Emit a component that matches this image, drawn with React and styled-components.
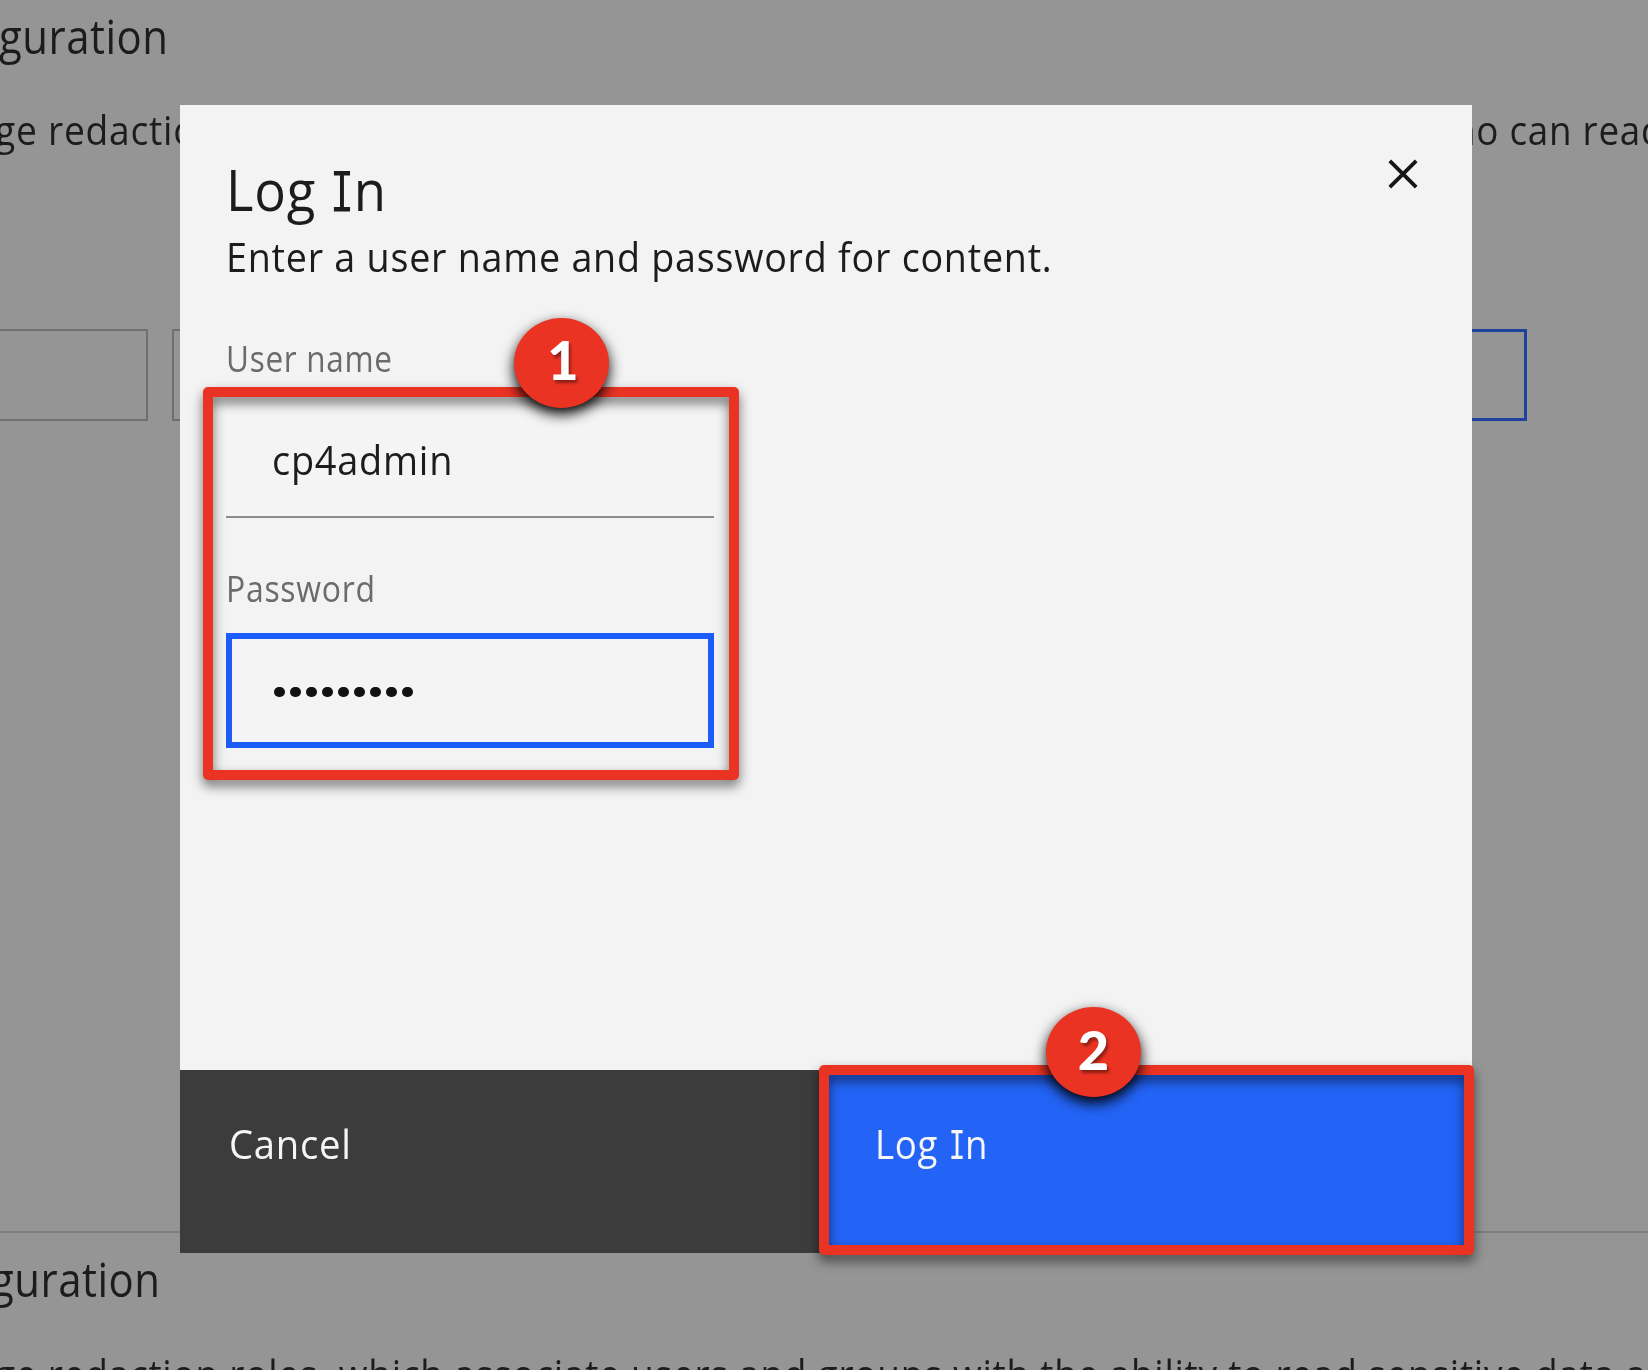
import React from "react";
import styled, { createGlobalStyle } from "styled-components";

const GlobalStyle = createGlobalStyle`
  *, *::before, *::after { box-sizing: border-box; }
  html, body { margin: 0; padding: 0; overflow: hidden; background: #959595; }
`;

const Screen = styled.div`
  position: relative;
  width: 1648px;
  height: 1370px;
  overflow: hidden;
  background: #959595;
  color: #1c1c1c;
  font-family: "Open Sans", "Noto Sans", sans-serif;
`;

const Text = styled.span`
  display: block;
  width: max-content;
  white-space: pre;
  font-size: ${(p) => p.$size || 40}px;
  line-height: ${(p) => (p.$size || 40) + 8}px;
  letter-spacing: ${(p) => p.$track ?? 0.8}px;
  color: ${(p) => p.$color || "inherit"};
  transform: scaleX(${(p) => p.$stretch || 0.93});
  transform-origin: 0 50%;
`;

const SerifI = styled.span`
  display: inline-block;
  font-family: "DejaVu Sans Mono", monospace;
  font-size: 0.97em;
  line-height: 1;
  margin: 0 -0.09em 0 -0.07em;
  transform: scaleX(0.78);
`;

/* Page behind the dialog */
const Page = styled.main`
  display: flex;
  flex-direction: column;
  height: 100%;
`;

const Section = styled.section`
  display: flex;
  flex-direction: column;
  flex: none;
  height: ${(p) => p.$height || "auto"};
  padding-top: ${(p) => p.$top}px;
  border-bottom: ${(p) => (p.$rule ? "2px solid #7f7f7f" : "0")};
`;

const Heading = styled.div`
  margin-left: ${(p) => p.$shift}px;
`;

const Description = styled.div`
  display: flex;
  justify-content: space-between;
  margin: ${(p) => p.$gap}px 0 0 -5px;
`;

const Trailing = styled.div`
  flex: none;
  width: 195px;
`;

const ButtonRow = styled.div`
  display: flex;
  gap: 24px;
  width: 1527px;
  height: 92px;
  margin-top: 175px;
`;

const OutlineButton = styled.div`
  flex: ${(p) => p.$flex};
  border: ${(p) => (p.$primary ? "3px solid #1f439c" : "2px solid #6f6f6f")};
  border-left-width: ${(p) => (p.$cut ? 0 : 2)}px;
`;

/* Dialog */
const Dialog = styled.div`
  position: absolute;
  left: 180px;
  top: 105px;
  width: 1292px;
  height: 1148px;
  display: flex;
  flex-direction: column;
  background: #f3f3f3;
`;

const DialogBody = styled.div`
  display: flex;
  justify-content: space-between;
  flex: 1;
  padding: 52px 54px 0 46px;
`;

const Form = styled.div`
  display: flex;
  flex-direction: column;
`;

const Subtitle = styled.div`
  margin: 12px 0 56px;
`;

const Field = styled.div`
  display: flex;
  flex-direction: column;
  gap: 22px;
  width: 488px;
  margin-bottom: 49px;
`;

const Input = styled.div`
  display: flex;
  align-items: center;
  height: 115px;
  padding-top: ${(p) => (p.$focused ? 3 : 1)}px;
  padding-left: ${(p) => (p.$focused ? 42 : 46)}px;
  background: #f4f4f4;
  border: ${(p) => (p.$focused ? "6px solid #1c5cf8" : "0 solid #8b8b8b")};
  border-bottom-width: ${(p) => (p.$focused ? 6 : 2)}px;
`;

const Dots = styled.div`
  display: flex;
  gap: 5.5px;
`;

const Dot = styled.span`
  width: 10.5px;
  height: 10.5px;
  border-radius: 50%;
  background: #111;
`;

const CloseButton = styled.div`
  width: 30px;
  height: 30px;
  margin-top: 2px;
  svg { display: block; }
`;

const DialogFooter = styled.div`
  display: grid;
  grid-template-columns: 640px 1fr;
  height: 183px;
`;

const FooterButton = styled.div`
  padding: ${(p) => (p.$primary ? "50px 55px" : "50px 49px")};
  background: ${(p) => (p.$primary ? "#2364f7" : "#3c3c3c")};
  color: #f6f6f6;
`;

/* Tutorial annotations drawn over the dialog */
const Highlight = styled.div`
  position: absolute;
  left: ${(p) => p.$x}px;
  top: ${(p) => p.$y}px;
  width: ${(p) => p.$w}px;
  height: ${(p) => p.$h}px;
  border: 10px solid #ea3323;
  border-radius: 5px;
  filter: drop-shadow(0 6px 6px rgba(0, 0, 0, 0.55));
`;

const Badge = styled.div`
  position: absolute;
  left: ${(p) => p.$x}px;
  top: ${(p) => p.$y}px;
  width: 95px;
  height: 90px;
  display: flex;
  justify-content: center;
  border-radius: 50%;
  background: #ea3323;
  box-shadow: 0 6px 14px rgba(0, 0, 0, 1);
  color: #fff;
  font: 900 54px/${(p) => p.$line}px Lato, sans-serif;
  text-shadow: 2px 3px 3px rgba(0, 0, 0, 0.4);
  padding-left: ${(p) => p.$nudge}px;
`;

function LogIn() {
  return (
    <>
      Log <SerifI>I</SerifI>n
    </>
  );
}

export default function App() {
  return (
    <Screen>
      <GlobalStyle />
      <Page>
        <Section $top={8} $height="1233px" $rule>
          <Heading $shift={-1}>
            <Text $size={48} $stretch={0.873} $track={0.6}>guration</Text>
          </Heading>
          <Description $gap={42}>
            <Text>ge redaction</Text>
            <Trailing>
              <Text $stretch={0.92}>ho can read</Text>
            </Trailing>
          </Description>
          <ButtonRow>
            <OutlineButton $flex="0 0 148px" $cut />
            <OutlineButton $flex="0 0 400px" />
            <OutlineButton $flex="1" $primary />
          </ButtonRow>
        </Section>
        <Section $top={18}>
          <Heading $shift={-9}>
            <Text $size={48} $stretch={0.873} $track={0.6}>guration</Text>
          </Heading>
          <Description $gap={43}>
            <Text $stretch={0.926}>
              ge redaction roles, which associate users and groups with the ability to read sensitive data a
            </Text>
          </Description>
        </Section>
      </Page>

      <Dialog>
        <DialogBody>
          <Form>
            <Text $size={56} $stretch={0.94}>
              <LogIn />
            </Text>
            <Subtitle>
              <Text $stretch={0.942}>Enter a user name and password for content.</Text>
            </Subtitle>
            <Field>
              <Text $size={36} $stretch={0.875} $color="#6b6b6b">User name</Text>
              <Input>
                <Text $stretch={0.947}>cp4admin</Text>
              </Input>
            </Field>
            <Field>
              <Text $size={36} $stretch={0.888} $color="#6b6b6b">Password</Text>
              <Input $focused>
                <Dots>
                  {Array.from({ length: 9 }, (_, i) => (
                    <Dot key={i} />
                  ))}
                </Dots>
              </Input>
            </Field>
          </Form>
          <CloseButton>
            <svg width="30" height="30" viewBox="0 0 30 30" fill="none" stroke="#161616" strokeWidth="3.8">
              <path d="M1.8 1.8 28.2 28.2M28.2 1.8 1.8 28.2" />
            </svg>
          </CloseButton>
        </DialogBody>
        <DialogFooter>
          <FooterButton>
            <Text $stretch={0.955}>Cancel</Text>
          </FooterButton>
          <FooterButton $primary>
            <Text $stretch={0.915}>
              <LogIn />
            </Text>
          </FooterButton>
        </DialogFooter>
      </Dialog>

      <Highlight $x={203} $y={387} $w={536} $h={393} />
      <Highlight $x={819} $y={1065} $w={655} $h={190} />
      <Badge $x={514} $y={318} $line={83} $nudge={3}>1</Badge>
      <Badge $x={1046} $y={1007} $line={85} $nudge={0}>2</Badge>
    </Screen>
  );
}
